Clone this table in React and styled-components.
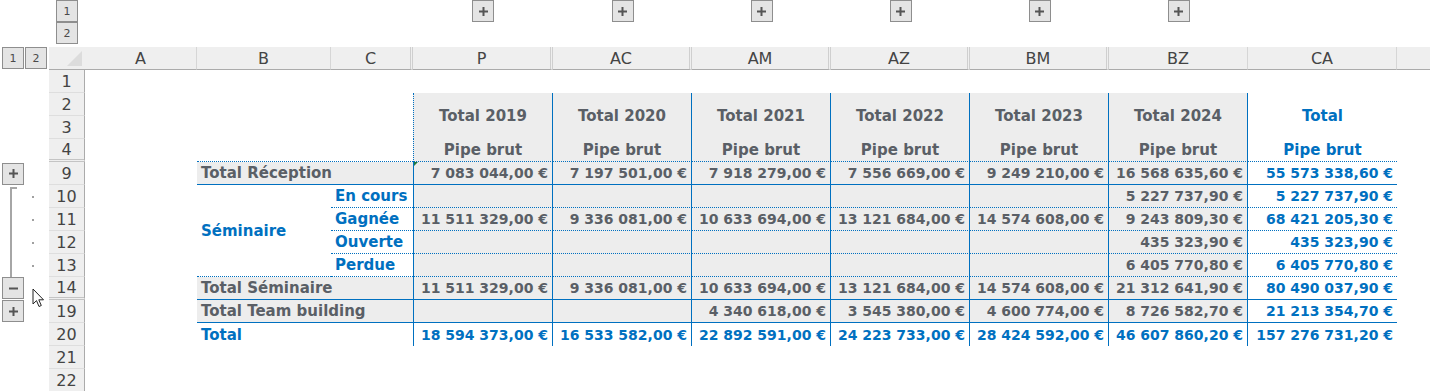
import React from 'react';
import styled, { createGlobalStyle } from 'styled-components';

const COLS = '49px 36px 112px 134px 82px 140px 139px 139px 139px 139px 139px 149px 1fr';
const BLUE = '#0070c0';
const INK = '#5a5f66';
const FILL = '#ededed';
const HEAD = '#efefef';
const FONT = '"DejaVu Sans", "Liberation Sans", sans-serif';

const GlobalStyle = createGlobalStyle`
  html, body { margin: 0; background: #fff; }
  body { overflow: hidden; font-family: ${FONT}; }
`;

const line = s => (s ? `1px ${s} ${BLUE}` : 'none');

const Sheet = styled.div`
  position: relative;
  width: 1430px;
  height: 391px;
  overflow: hidden;
  background: #fff;
`;

const OutlineBar = styled.div`
  display: grid;
  grid-template-columns: ${COLS};
  height: 47px;
`;

const LevelStack = styled.div`
  grid-column: ${p => p.$col};
  display: flex;
  flex-direction: ${p => (p.$row ? 'row' : 'column')};
  padding-left: ${p => p.$pad}px;
  gap: ${p => (p.$row ? 1 : 0)}px;
`;

const OutlineButton = styled.div`
  grid-column: ${p => p.$col || 'auto'};
  grid-row: ${p => p.$gridRow || 'auto'};
  justify-self: ${p => (p.$center ? 'center' : 'start')};
  align-self: ${p => p.$alignSelf || 'start'};
  margin-left: ${p => p.$left || 0}px;
  width: 22px;
  height: 22px;
  box-sizing: border-box;
  border: 1px solid #8e8e8e;
  background: #e4e4e4;
  display: flex;
  align-items: center;
  justify-content: center;
  font: 11px ${FONT};
  color: #4a4a4a;
`;

const HeaderRow = styled.div`
  display: grid;
  grid-template-columns: ${COLS};
  height: 23px;
`;

const Corner = styled.div`
  grid-column: 2;
  background: ${HEAD};
  border-bottom: 1px solid #ababab;
  box-sizing: border-box;
  display: flex;
  align-items: flex-end;
  justify-content: flex-end;
  padding: 0 3px 3px 0;
`;

const Triangle = styled.div`
  width: 0;
  height: 0;
  border-left: 15px solid transparent;
  border-bottom: 15px solid #dcdcdc;
`;

const ColLetter = styled.div`
  background: ${HEAD};
  border-bottom: 1px solid #ababab;
  border-right: ${p => (p.$sep === 'double' ? '3px double #cfcfcf' : p.$sep === 'single' ? '1px solid #d6d6d6' : 'none')};
  box-sizing: border-box;
  display: flex;
  align-items: center;
  justify-content: center;
  font: 16px ${FONT};
  color: #444;
`;

const Body = styled.div`
  display: grid;
  grid-template-columns: ${COLS};
  grid-template-rows: repeat(14, 23px);
`;

const RowNum = styled.div`
  grid-column: 2;
  grid-row: ${p => p.$row};
  background: ${HEAD};
  border-right: 1px solid #ababab;
  border-bottom: ${p => (p.$hidden ? '3px double #c4c4c4' : '1px solid #dedede')};
  box-sizing: border-box;
  display: flex;
  align-items: center;
  justify-content: center;
  font: 16px ${FONT};
  color: #444;
`;

const Bracket = styled.div`
  grid-column: 1;
  grid-row: 6 / span 4;
  margin: 2px 0 0 10px;
  width: 5px;
  border-left: 2px solid #a6a6a6;
  border-top: 2px solid #a6a6a6;
`;

const Dot = styled.div`
  grid-column: 1;
  grid-row: ${p => p.$row};
  align-self: center;
  margin-left: 32px;
  width: 2px;
  height: 2px;
  background: #a0a0a0;
`;

const Cell = styled.div`
  grid-column: ${p => p.$col} / span ${p => p.$span || 1};
  grid-row: ${p => p.$row} / span ${p => p.$rows || 1};
  position: relative;
  box-sizing: border-box;
  display: flex;
  align-items: center;
  justify-content: ${p => (p.$align === 'right' ? 'flex-end' : p.$align === 'center' ? 'center' : 'flex-start')};
  padding: 0 4px;
  background: ${p => (p.$fill ? FILL : 'transparent')};
  color: ${p => (p.$blue ? BLUE : INK)};
  font-family: ${FONT};
  font-weight: bold;
  font-size: ${p => (p.$num ? 14 : 15)}px;
  white-space: nowrap;
  border-bottom: ${p => line(p.$bottom)};
  border-right: ${p => line(p.$right)};
  border-left: ${p => line(p.$left)};

  ${p => p.$flag && `
    &::before {
      content: '';
      position: absolute;
      top: 0;
      left: 0;
      border-top: 4px solid #1f7a43;
      border-right: 4px solid transparent;
    }
  `}
`;

const Cursor = styled.svg`
  position: absolute;
  left: 32px;
  top: 288px;
`;

const PlusIcon = () => (
  <svg width="9" height="9" viewBox="0 0 9 9">
    <rect x="0" y="3.5" width="9" height="2" fill="#555" />
    <rect x="3.5" y="0" width="2" height="9" fill="#555" />
  </svg>
);

const MinusIcon = () => (
  <svg width="9" height="9" viewBox="0 0 9 9">
    <rect x="0" y="3.5" width="9" height="2" fill="#555" />
  </svg>
);

const letters = [
  ['A', 'single'], ['B', 'single'], ['C', 'double'], ['P', 'double'], ['AC', 'double'],
  ['AM', 'double'], ['AZ', 'double'], ['BM', 'double'], ['BZ', 'single'], ['CA', 'single'], ['', 'none'],
];

const rowNumbers = [1, 2, 3, 4, 9, 10, 11, 12, 13, 14, 19, 20, 21, 22];
const years = ['2019', '2020', '2021', '2022', '2023', '2024'];

const rows = [
  { row: 5, label: 'Total Réception', bottom: 'solid', values: ['7 083 044,00 €', '7 197 501,00 €', '7 918 279,00 €', '7 556 669,00 €', '9 249 210,00 €', '16 568 635,60 €', '55 573 338,60 €'] },
  { row: 6, sub: 'En cours', bottom: 'dotted', values: ['', '', '', '', '', '5 227 737,90 €', '5 227 737,90 €'] },
  { row: 7, sub: 'Gagnée', bottom: 'dotted', values: ['11 511 329,00 €', '9 336 081,00 €', '10 633 694,00 €', '13 121 684,00 €', '14 574 608,00 €', '9 243 809,30 €', '68 421 205,30 €'] },
  { row: 8, sub: 'Ouverte', bottom: 'dotted', values: ['', '', '', '', '', '435 323,90 €', '435 323,90 €'] },
  { row: 9, sub: 'Perdue', bottom: 'dotted', values: ['', '', '', '', '', '6 405 770,80 €', '6 405 770,80 €'] },
  { row: 10, label: 'Total Séminaire', bottom: 'solid', values: ['11 511 329,00 €', '9 336 081,00 €', '10 633 694,00 €', '13 121 684,00 €', '14 574 608,00 €', '21 312 641,90 €', '80 490 037,90 €'] },
  { row: 11, label: 'Total Team building', bottom: 'solid', values: ['', '', '4 340 618,00 €', '3 545 380,00 €', '4 600 774,00 €', '8 726 582,70 €', '21 213 354,70 €'] },
  { row: 12, label: 'Total', grand: true, values: ['18 594 373,00 €', '16 533 582,00 €', '22 892 591,00 €', '24 223 733,00 €', '28 424 592,00 €', '46 607 860,20 €', '157 276 731,20 €'] },
];

function DataRow({ r }) {
  const cells = [];
  if (r.label) {
    cells.push(
      <Cell key="l" $col={4} $span={2} $row={r.row} $fill={!r.grand} $blue={r.grand} $bottom={r.bottom}>
        {r.label}
      </Cell>
    );
  } else {
    cells.push(
      <Cell key="l" $col={5} $row={r.row} $blue $bottom={r.bottom}>{r.sub}</Cell>
    );
  }
  r.values.forEach((v, i) => {
    const ca = i === 6;
    cells.push(
      <Cell
        key={i}
        $col={6 + i}
        $row={r.row}
        $align="right"
        $num
        $fill={!ca && !r.grand}
        $blue={ca || r.grand}
        $bottom={r.bottom}
        $right={ca ? null : 'solid'}
        $left={i === 0 ? 'solid' : null}
        $flag={i === 0 && r.row === 5}
      >
        {v}
      </Cell>
    );
  });
  return cells;
}

export default function App() {
  return (
    <Sheet>
      <GlobalStyle />
      <OutlineBar>
        <LevelStack $col={2} $pad={7}>
          <OutlineButton>1</OutlineButton>
          <OutlineButton>2</OutlineButton>
        </LevelStack>
        {years.map((y, i) => (
          <OutlineButton key={y} $col={6 + i} $center>
            <PlusIcon />
          </OutlineButton>
        ))}
      </OutlineBar>

      <HeaderRow>
        <LevelStack $col={1} $pad={2} $row>
          <OutlineButton>1</OutlineButton>
          <OutlineButton>2</OutlineButton>
        </LevelStack>
        <Corner><Triangle /></Corner>
        {letters.map(([l, sep], i) => (
          <ColLetter key={i} $sep={sep}>{l}</ColLetter>
        ))}
      </HeaderRow>

      <Body>
        {rowNumbers.map((n, i) => (
          <RowNum key={n} $row={i + 1} $hidden={n === 4 || n === 14}>{n}</RowNum>
        ))}

        <OutlineButton $col={1} $gridRow={5} $left={2} $alignSelf="center"><PlusIcon /></OutlineButton>
        <Bracket />
        {[6, 7, 8, 9].map(r => <Dot key={r} $row={r} />)}
        <OutlineButton $col={1} $gridRow={10} $left={2}><MinusIcon /></OutlineButton>
        <OutlineButton $col={1} $gridRow={11} $left={2}><PlusIcon /></OutlineButton>

        {years.map((y, i) => (
          <React.Fragment key={y}>
            <Cell $col={6 + i} $row={2} $rows={2} $align="center" $fill $right="solid" $left={i === 0 ? 'dotted' : null}>
              Total {y}
            </Cell>
            <Cell $col={6 + i} $row={4} $align="center" $fill $right="solid" $left={i === 0 ? 'dotted' : null} $bottom="dotted">
              Pipe brut
            </Cell>
          </React.Fragment>
        ))}
        <Cell $col={12} $row={2} $rows={2} $align="center" $blue>Total</Cell>
        <Cell $col={12} $row={4} $align="center" $blue $bottom="dotted">Pipe brut</Cell>
        <Cell $col={4} $span={2} $row={4} $bottom="dotted" />

        <Cell $col={4} $row={6} $rows={4} $blue $bottom="dotted">Séminaire</Cell>
        {rows.map(r => <DataRow key={r.row} r={r} />)}
      </Body>

      <Cursor width="13" height="20" viewBox="0 0 13 20">
        <path d="M1 1 L1 16 L4.5 12.6 L7 18.5 L9.3 17.5 L6.8 11.8 L11.5 11.8 Z" fill="#fff" stroke="#222" strokeWidth="1" strokeLinejoin="miter" />
      </Cursor>
    </Sheet>
  );
}
